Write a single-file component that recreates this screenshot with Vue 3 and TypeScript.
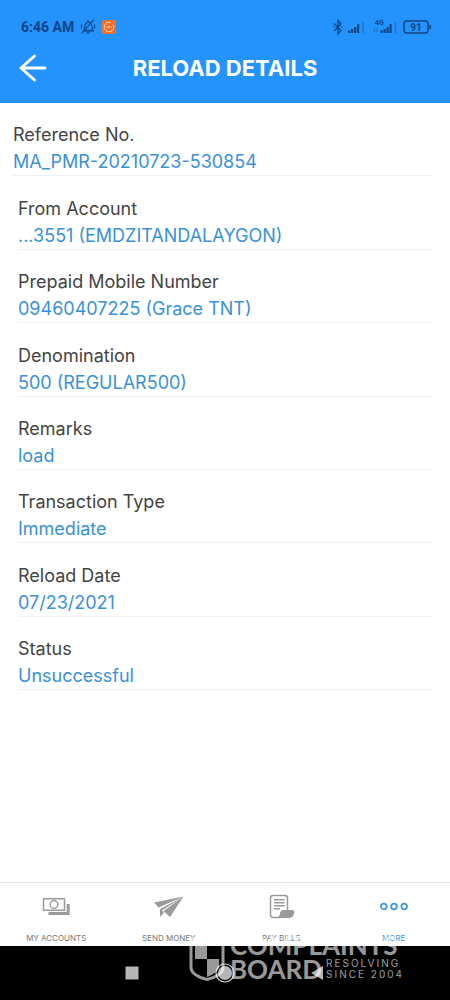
<script setup lang="ts">
interface Detail {
  label: string
  value: string
  wide?: boolean
}

const details: Detail[] = [
  { label: 'Reference No.', value: 'MA_PMR-20210723-530854', wide: true },
  { label: 'From Account', value: '...3551 (EMDZITANDALAYGON)' },
  { label: 'Prepaid Mobile Number', value: '09460407225 (Grace TNT)' },
  { label: 'Denomination', value: '500 (REGULAR500)' },
  { label: 'Remarks', value: 'load' },
  { label: 'Transaction Type', value: 'Immediate' },
  { label: 'Reload Date', value: '07/23/2021' },
  { label: 'Status', value: 'Unsuccessful' },
]
</script>

<template>
  <div class="screen">
    <header class="top">
      <div class="status">
        <span class="time">6:46 AM</span>
        <svg class="bell" width="16" height="16" viewBox="0 0 16 16" fill="none" stroke="#0f4f94" stroke-width="1.3" stroke-linecap="round">
          <path d="M4 11.5C5 9 4 4 8 3c4 0 4 4 4.500 8.500zM3 12h10.500M7 14h2M13.500 1L2 14M1.500 6v3M14.500 6v3M8 3V1.500" />
        </svg>
        <svg width="14" height="14" viewBox="0 0 14 14">
          <rect width="14" height="14" rx="2.500" fill="#f1702b" />
          <circle cx="7" cy="7" r="4.800" fill="none" stroke="#ffd0b0" stroke-width="1" stroke-dasharray="24 3" />
          <path d="M4.800 6.200v1.600M6.300 6.200v1.600h1.200V6.200zM9 6.200v1.600" fill="none" stroke="#ffc09a" stroke-width=".8" />
        </svg>
        <span class="grow"></span>
        <svg width="99" height="18" viewBox="0 0 99 18" fill="#0d4585">
          <path d="M1 5.500l7 7L5 16V2.500L8 6l-7 7" fill="none" stroke="#0d4585" stroke-width="1.300" />
          <path d="M0 9h1.500M8 9h1.500" stroke="#0d4585" />
          <path d="M15 12.500h2.200V15H15zM18 11h2.200v4H18zM21 9h2.200v6H21zM24 6h2.200v9H24z" />
          <path d="M29 4h1.800v11H29z" opacity=".35" />
          <text x="42" y="7" class="net">4G</text>
          <path d="M41 14l1-4M43.500 14l1-4" stroke="#0d4585" stroke-width=".8" opacity=".6" />
          <path d="M47.500 12.500h2.200V15h-2.200zM50.500 11h2.200v4h-2.200zM53.500 9h2.200v6h-2.200zM56.500 6h2.200v9h-2.200z" />
          <path d="M61.500 4h1.800v11h-1.800z" opacity=".35" />
          <rect x="71" y="3" width="24" height="12" rx="3" fill="none" stroke="#0d4585" stroke-width="1.500" />
          <path d="M96.500 7H98v4h-1.500z" />
          <text x="83" y="12.500" class="charge">91</text>
        </svg>
      </div>
      <div class="title">
        <button class="back" type="button" aria-label="Back">
          <svg width="28" height="28" viewBox="0 0 28 28" fill="none" stroke="#fff" stroke-width="3" stroke-linecap="round" stroke-linejoin="round">
            <path d="M15.500 2L2 14l13.500 12M2.500 14H26" />
          </svg>
        </button>
        <h1>RELOAD DETAILS</h1>
      </div>
    </header>

    <main>
      <dl>
        <div v-for="d in details" :key="d.label" class="row" :class="{ wide: d.wide }">
          <dt>{{ d.label }}</dt>
          <dd>{{ d.value }}</dd>
        </div>
      </dl>
    </main>

    <nav class="tabs">
      <a href="#accounts">
        <svg width="28" height="28" viewBox="0 0 28 28" fill="none" stroke="#9b9b9b">
          <path d="M1.500 5.700h21v11.600h-21z" stroke-width="1.500" />
          <ellipse cx="12" cy="11.500" rx="3.800" ry="4" stroke-width="1.500" />
          <path d="M6.500 20.500h19.700V11" stroke-width="3" />
        </svg>
        <span>MY ACCOUNTS</span>
      </a>
      <a href="#send">
        <svg width="32" height="28" viewBox="0 0 32 28" fill="#9b9b9b">
          <path d="M30.500 3.500L1 9.500l4.500 5zM30.500 3.500L7 16v8l4-4.500-2-2zM30.500 3.500L10.500 18l6.500 6z" />
        </svg>
        <span>SEND MONEY</span>
      </a>
      <a href="#bills">
        <svg width="28" height="28" viewBox="0 0 28 28" fill="none" stroke="#9b9b9b" stroke-width="1.500">
          <path d="M20.500 17V5Q20.500 2.500 18 2.500H6Q3.500 2.500 3.500 5v16.500q0 3 3 3H13" />
          <path d="M7 6.800h10.500M7 9.800h10.500M7 12.800h10.500M7 15.800h6" />
          <path d="M16 17h9q2.700 0 2.200 3-.8 4.500-5 5H8.500q4-.5 4.500-4.500.5-3.500 3-3.500z" fill="#9b9b9b" stroke="none" />
        </svg>
        <span>PAY BILLS</span>
      </a>
      <a href="#more" class="active">
        <svg width="28" height="28" viewBox="0 0 28 28" fill="none" stroke="#3e98dc" stroke-width="1.800">
          <circle cx="3.800" cy="13.500" r="2.800" /><circle cx="14" cy="13.500" r="2.800" /><circle cx="24.200" cy="13.500" r="2.800" />
        </svg>
        <span>MORE</span>
      </a>
    </nav>

    <footer class="system">
      <button type="button" aria-label="Recent apps">
        <svg width="24" height="24" viewBox="0 0 24 24"><path d="M5.500 5.500h13v13h-13z" fill="#b5b5b5" /></svg>
      </button>
      <button type="button" aria-label="Home">
        <svg width="24" height="24" viewBox="0 0 24 24">
          <circle cx="12" cy="12" r="9" fill="#000" stroke="#d2d2d2" stroke-width="1.200" />
          <circle cx="12" cy="12" r="7" fill="#b5b5b5" />
        </svg>
      </button>
      <button type="button" aria-label="Go back">
        <svg width="24" height="24" viewBox="0 0 24 24"><path d="M17 5v14L5 12z" fill="#b5b5b5" /></svg>
      </button>
      <div class="watermark">
        <svg width="36" height="44" viewBox="0 0 36 44">
          <path d="M2 2h32v28q0 5-5 8-5 3.500-11 4.500Q12 41.500 7 38q-5-3-5-8z" fill="none" stroke="#fff" stroke-width="3" />
          <path d="M6 9h12v13H6zM18 22h12v9q-3 6-12 9z" fill="#fff" />
        </svg>
        <div class="brand">
          <div class="word">COMPLAINTS</div>
          <div class="line">
            <div class="word">BOARD</div>
            <div class="tag">RESOLVING<br />SINCE 2004</div>
          </div>
        </div>
      </div>
    </footer>
  </div>
</template>

<style>
body {
  margin: 0;
  background: #fff;
}
</style>

<style scoped>
.screen {
  display: flex;
  flex-direction: column;
  min-height: 100vh;
  font-family: Inter, "Liberation Sans", sans-serif;
}
.top {
  background: #2593fe;
  padding-bottom: 15px;
}
.status {
  display: flex;
  align-items: center;
  gap: 6px;
  height: 48px;
  padding: 6px 18px 0 21px;
  box-sizing: border-box;
}
.time {
  font: 700 14px/18px Roboto, sans-serif;
  color: #0d4585;
}
.grow {
  flex: 1;
}
.net {
  font: 700 7px Roboto, sans-serif;
}
.charge {
  font: 700 10px Roboto, sans-serif;
  text-anchor: middle;
}
.title {
  display: grid;
  grid-template-columns: 48px 1fr 48px;
  align-items: center;
  height: 40px;
}
.back {
  display: flex;
  padding: 0 0 0 19px;
  border: 0;
  background: none;
}
h1 {
  margin: 0;
  color: #fff;
  font-size: 22px;
  font-weight: 700;
  line-height: 26px;
  text-align: center;
  white-space: nowrap;
}
main {
  flex: 1;
  display: flex;
  padding-bottom: 192px;
}
dl {
  flex: 1;
  display: grid;
  grid-auto-rows: 1fr;
  margin: 0;
}
.row {
  display: flex;
  flex-direction: column;
  justify-content: flex-end;
  margin: 0 18px;
  border-bottom: 1px solid #f0f0f0;
}
.row.wide {
  margin-left: 13px;
}
dt,
dd {
  margin: 0;
  font-size: 18px;
  line-height: 27px;
}
dt {
  color: #444;
}
dd {
  color: #3991da;
}
.tabs {
  display: grid;
  grid-template-columns: repeat(4, 1fr);
  height: 63px;
  border-top: 1px solid #e6e6e6;
}
.tabs a {
  display: flex;
  flex-direction: column;
  align-items: center;
  gap: 12px;
  padding-top: 10px;
  color: #777;
  font-size: 8px;
  line-height: 10px;
  text-decoration: none;
}
.tabs .active {
  color: #3e98dc;
}
.system {
  position: relative;
  display: flex;
  justify-content: center;
  gap: 69px;
  height: 54px;
  background: #000;
}
.system button {
  display: flex;
  align-items: center;
  padding: 0;
  border: 0;
  background: none;
}
.watermark {
  position: absolute;
  left: 50%;
  bottom: 19px;
  display: flex;
  align-items: flex-end;
  gap: 5px;
  margin-left: -36px;
  color: #fff;
  opacity: 0.6;
  pointer-events: none;
}
.brand {
  white-space: nowrap;
}
.word {
  font: 700 26px/24px Lato, sans-serif;
}
.line {
  display: flex;
  align-items: center;
  gap: 4px;
}
.tag {
  font: 400 10px/11px Inter, sans-serif;
  letter-spacing: 2px;
}
</style>
